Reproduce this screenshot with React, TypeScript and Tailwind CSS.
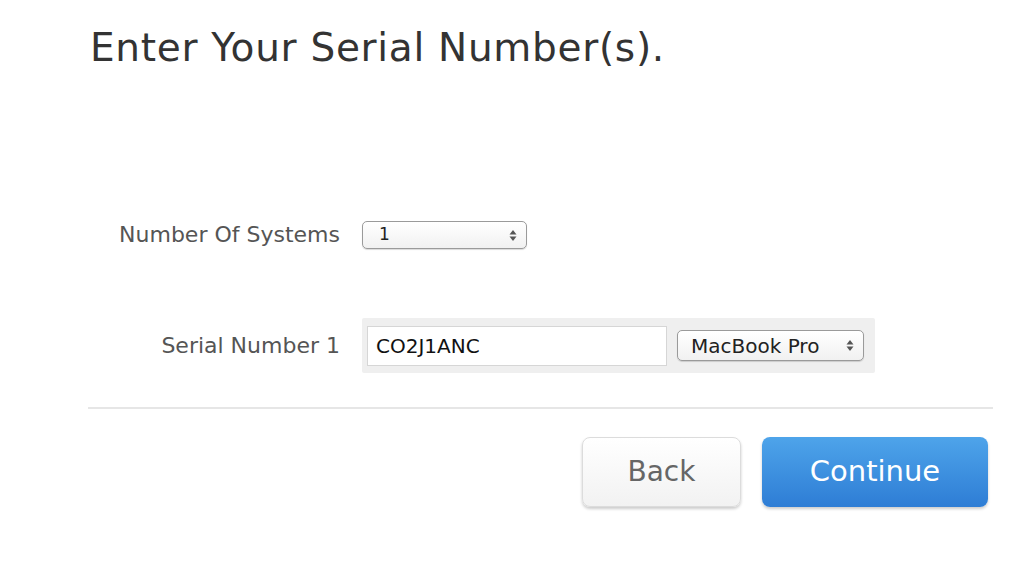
import React from 'react';

function Arrows() {
  return (
    <svg width="8" height="13" viewBox="0 0 8 13" className="shrink-0">
      <path d="M4 1 L7.5 5.5 H0.5 Z" fill="#555" />
      <path d="M4 12 L7.5 7.5 H0.5 Z" fill="#555" />
    </svg>
  );
}

export default function App() {
  return (
    <div className="w-[1024px] h-[576px] bg-white overflow-hidden" style={{ fontFamily: '"DejaVu Sans", "Liberation Sans", sans-serif' }}>
      <div className="ml-[88px] w-[905px] pt-[26px]">
        <h1 className="ml-[2px] text-[39px] leading-[44px] text-[#333] tracking-[0.7px]">Enter Your Serial Number(s).</h1>

        {/* Number of systems */}
        <div className="mt-[151px] flex items-center">
          <div className="w-[252px] text-right text-[22px] leading-[28px] text-[#555]">Number Of Systems</div>
          <div className="ml-[22px] w-[165px] h-[28px] rounded-[5px] border border-[#9a9a9a] bg-gradient-to-b from-white to-[#f1f1f1] shadow-[0_1px_1px_rgba(0,0,0,0.15)] flex items-center justify-between pl-[16px] pr-[9px]">
            <span className="text-[17px] text-[#222]">1</span>
            <Arrows />
          </div>
        </div>

        {/* Serial number */}
        <div className="mt-[69px] flex items-center">
          <div className="w-[252px] text-right text-[22px] leading-[28px] text-[#555]">Serial Number 1</div>
          <div className="ml-[22px] w-[513px] h-[55px] bg-[#efefef] rounded-[2px] flex items-center pl-[5px] pr-[11px]">
            <div className="w-[300px] h-[40px] bg-white border border-[#d6d6d6] flex items-center pl-[8px] text-[20px] text-[#111]">CO2J1ANC</div>
            <div className="ml-[10px] w-[187px] h-[31px] rounded-[5px] border border-[#9a9a9a] bg-gradient-to-b from-white to-[#f1f1f1] shadow-[0_1px_1px_rgba(0,0,0,0.15)] flex items-center justify-between pl-[13px] pr-[9px]">
              <span className="text-[20px] text-[#222]">MacBook Pro</span>
              <Arrows />
            </div>
          </div>
        </div>

        <div className="mt-[34px] h-[2px] bg-[#e6e6e6]" />

        <div className="mt-[28px] flex justify-end gap-[21px] pr-[5px]">
          <button className="w-[159px] h-[70px] rounded-[8px] border border-[#dcdcdc] bg-gradient-to-b from-white to-[#f2f2f2] shadow-[0_2px_3px_rgba(0,0,0,0.2)] text-[28px] text-[#666]">Back</button>
          <button className="w-[226px] h-[70px] rounded-[8px] bg-gradient-to-b from-[#4ea4ea] to-[#2e7dd5] shadow-[0_2px_3px_rgba(0,0,0,0.2)] text-[29px] text-white">Continue</button>
        </div>
      </div>
    </div>
  );
}
